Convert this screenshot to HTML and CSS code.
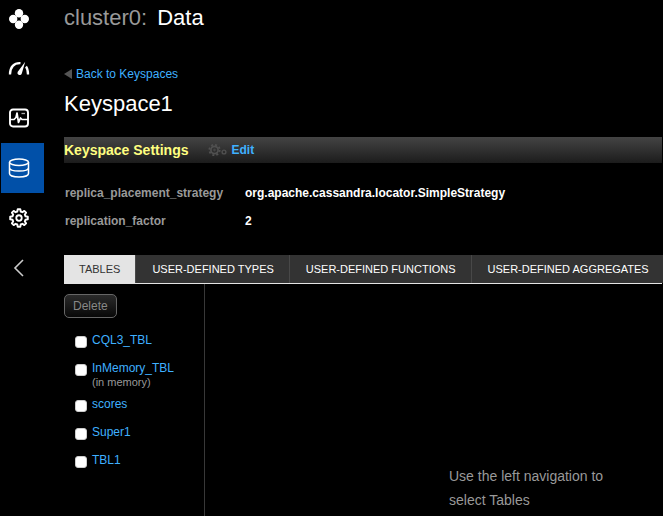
FILE: index.html
```html
<!DOCTYPE html>
<html lang="en">
<head>
<meta charset="utf-8">
<title>cluster0: Data</title>
<link rel="stylesheet" href="styles.css">
</head>
<body>
<div class="app">
  <nav class="sidebar" aria-label="Main">
    <a class="nav-item nav-logo" href="#" aria-label="Home">
      <svg width="20" height="20" viewBox="0 0 20 20" fill="#fff"><circle cx="10" cy="4.200" r="4.200"/><circle cx="4.200" cy="10" r="4.200"/><circle cx="15.800" cy="10" r="4.200"/><circle cx="10" cy="15.800" r="4.200"/></svg>
    </a>
    <a class="nav-item" href="#" aria-label="Dashboard">
      <svg width="22" height="20" viewBox="0 0 22 20"><g fill="none" stroke="#fff" stroke-width="2.300"><path d="M2 16.500C2 9 6 4.800 12.500 5.200"/><path d="M18 8.500C19.500 10.500 20 13 20 16.500"/></g><path d="M17.200 3.800L13.800 15.600A2.200 2.200 0 0 1 9.600 14Z" fill="#fff"/></svg>
    </a>
    <a class="nav-item" href="#" aria-label="Activity">
      <svg width="20" height="20" viewBox="0 0 20 20" fill="none" stroke="#fff"><rect x="1" y="1.500" width="18" height="17" rx="3" stroke-width="1.900"/><path d="M1 11.500H5L7 9.500L8 5L9.500 14.500L11.500 10L13 11.500H19" stroke-width="1.700" stroke-linejoin="round"/><path d="M12.500 5.500H16" stroke="#aaa" stroke-width="1.300"/></svg>
    </a>
    <a class="nav-item nav-active" href="#" aria-label="Data" aria-current="page">
      <svg width="22" height="20" viewBox="0 0 22 20" fill="none" stroke="#fff" stroke-width="1.500"><ellipse cx="11" cy="4.200" rx="9.500" ry="3.200"/><path d="M1.500 4.200V15.500C1.500 17.500 5.500 19 11 19S20.500 17.500 20.500 15.500V4.200M1.500 9.700C1.500 11.700 5.500 13 11 13S20.500 11.700 20.500 9.700"/></svg>
    </a>
    <a class="nav-item" href="#" aria-label="Settings">
      <svg width="20" height="20" viewBox="-10 -10 20 20" fill="none" stroke="#fff" stroke-width="1.900" stroke-linejoin="round"><circle r="2.700"/><path d="M-1.700 -6.500L-1.300 -8.800H1.300L1.700 -6.500L3.400 -5.800L5.300 -7.100L7.100 -5.300L5.800 -3.400L6.500 -1.700L8.800 -1.300V1.300L6.500 1.700L5.800 3.400L7.100 5.300L5.300 7.100L3.400 5.800L1.700 6.500L1.300 8.800H-1.300L-1.700 6.500L-3.400 5.800L-5.300 7.100L-7.100 5.300L-5.800 3.400L-6.500 1.700L-8.800 1.300V-1.300L-6.500 -1.700L-5.800 -3.400L-7.100 -5.300L-5.300 -7.100L-3.400 -5.800Z"/></svg>
    </a>
    <button class="nav-item" type="button" aria-label="Collapse">
      <svg width="20" height="20" viewBox="0 0 20 20" fill="none" stroke="#ccc" stroke-width="1.600"><path d="M14 2L6 10L14 18"/></svg>
    </button>
  </nav>

  <main class="content">
    <h1 class="page-title"><span class="cluster">cluster0:</span>Data</h1>
    <a class="back" href="#"><svg width="8" height="10" viewBox="0 0 8 10"><path d="M8 0V10L0 5Z" fill="#555"/></svg>Back to Keyspaces</a>
    <h2 class="keyspace">Keyspace1</h2>

    <section>
      <div class="section-bar">
        <h3 class="section-title">Keyspace Settings</h3>
        <a class="edit" href="#"><svg width="20" height="14" viewBox="0 0 20 14" fill="none" stroke="#505050"><circle cx="6.500" cy="7" r="3.600" stroke-width="1.700"/><circle cx="6.500" cy="7" r="5.200" stroke-width="1.800" stroke-dasharray="2.040 2.040"/><circle cx="6.500" cy="7" r=".8"/><circle cx="16" cy="9" r="1.900" stroke-width="1.400"/></svg>Edit</a>
      </div>
      <dl class="settings">
        <dt>replica_placement_strategy</dt><dd>org.apache.cassandra.locator.SimpleStrategy</dd>
        <dt>replication_factor</dt><dd>2</dd>
      </dl>
    </section>

    <div class="tabs" role="tablist">
      <button class="tab tab-active" type="button" role="tab" aria-selected="true">TABLES</button>
      <button class="tab" type="button" role="tab" aria-selected="false">USER-DEFINED TYPES</button>
      <button class="tab" type="button" role="tab" aria-selected="false">USER-DEFINED FUNCTIONS</button>
      <button class="tab" type="button" role="tab" aria-selected="false">USER-DEFINED AGGREGATES</button>
    </div>

    <div class="panel">
      <div class="list-pane">
        <button class="delete" type="button">Delete</button>
        <ul class="tables">
          <li><input type="checkbox" aria-labelledby="t1"><div><a href="#" id="t1">CQL3_TBL</a></div></li>
          <li><input type="checkbox" aria-labelledby="t2"><div><a href="#" id="t2">InMemory_TBL</a><span class="note">(in memory)</span></div></li>
          <li><input type="checkbox" aria-labelledby="t3"><div><a href="#" id="t3">scores</a></div></li>
          <li><input type="checkbox" aria-labelledby="t4"><div><a href="#" id="t4">Super1</a></div></li>
          <li><input type="checkbox" aria-labelledby="t5"><div><a href="#" id="t5">TBL1</a></div></li>
        </ul>
      </div>
      <div class="detail-pane">
        <p class="hint">Use the left navigation to select Tables</p>
      </div>
    </div>
  </main>
</div>
</body>
</html>
```
FILE: styles.css
```css
* {
  box-sizing: border-box;
}

body {
  margin: 0;
  background: #000;
  color: #fff;
  font: 12px/16px "Liberation Sans", Arial, sans-serif;
}

a {
  color: #3fb0ff;
  text-decoration: none;
}

h1, h2, h3, p, ul, dl, dd {
  margin: 0;
  padding: 0;
}

button {
  font-family: inherit;
}

.app {
  display: flex;
  min-height: 100vh;
}

.sidebar {
  flex: none;
  width: 44px;
  padding-left: 1px;
}

.nav-item {
  display: flex;
  align-items: center;
  justify-content: center;
  width: 100%;
  height: 50px;
  padding: 0 7px 0 0;
  border: 0;
  background: none;
}

.nav-logo {
  height: 38px;
  margin-bottom: 5px;
}

.nav-active {
  background: #0150a8;
}

.content {
  flex: 1;
  min-width: 0;
  display: flex;
  flex-direction: column;
  padding: 4px 1px 0 20px;
}

.page-title,
.keyspace {
  font-size: 22px;
  line-height: 28px;
  font-weight: 400;
}

.cluster {
  margin-right: 10px;
  color: #999;
}

.back {
  display: flex;
  align-items: center;
  gap: 4px;
  margin: 34px 0 8px;
}

.keyspace {
  margin-bottom: 19px;
}

.section-bar {
  display: flex;
  align-items: center;
  gap: 19px;
  height: 26px;
  background: linear-gradient(#444, #1c1c1c);
}

.section-title {
  color: #ffff80;
  font-size: 14px;
}

.edit {
  display: flex;
  align-items: center;
  gap: 4px;
  font-weight: 700;
}

.settings {
  display: grid;
  grid-template-columns: 180px 1fr;
  row-gap: 12px;
  padding: 22px 0 26px 1px;
  font-weight: 700;
}

.settings dt {
  color: #999;
}

.tabs {
  display: flex;
  background: #333;
  border-bottom: 1px solid #e4e4e4;
}

.tab {
  height: 28px;
  padding: 0 15px 0 16px;
  border: 0;
  border-left: 1px solid #484848;
  background: #333;
  color: #fff;
  font-size: 11px;
  white-space: nowrap;
}

.tab-active {
  padding-left: 15px;
  border-left: 0;
  background: #e4e4e4;
  color: #333;
}

.panel {
  flex: 1;
  display: flex;
}

.list-pane {
  flex: none;
  width: 141px;
  padding-top: 10px;
  border-right: 1px solid #383838;
}

.delete {
  height: 24px;
  padding: 0 8px;
  border: 1px solid #666;
  border-radius: 5px;
  background: linear-gradient(#2a2a2a, #080808);
  color: #888;
  font-size: 12px;
}

.tables {
  display: grid;
  gap: 12px;
  padding: 14px 0 0 11px;
  list-style: none;
}

.tables li {
  display: flex;
  align-items: flex-start;
  gap: 5px;
}

.tables input {
  appearance: none;
  width: 12px;
  height: 12px;
  margin: 4px 0 0;
  border: 1px solid #ccc;
  border-radius: 3px;
  background: #fff;
}

.tables input:checked {
  background: #3fb0ff;
}

.note {
  display: block;
  margin-bottom: -4px;
  color: #999;
  font-size: 11px;
  line-height: 12px;
}

.detail-pane {
  flex: 1;
  padding: 180px 16px 0 244px;
}

.hint {
  max-width: 160px;
  color: #999;
  font-size: 14px;
  line-height: 24px;
}
```
